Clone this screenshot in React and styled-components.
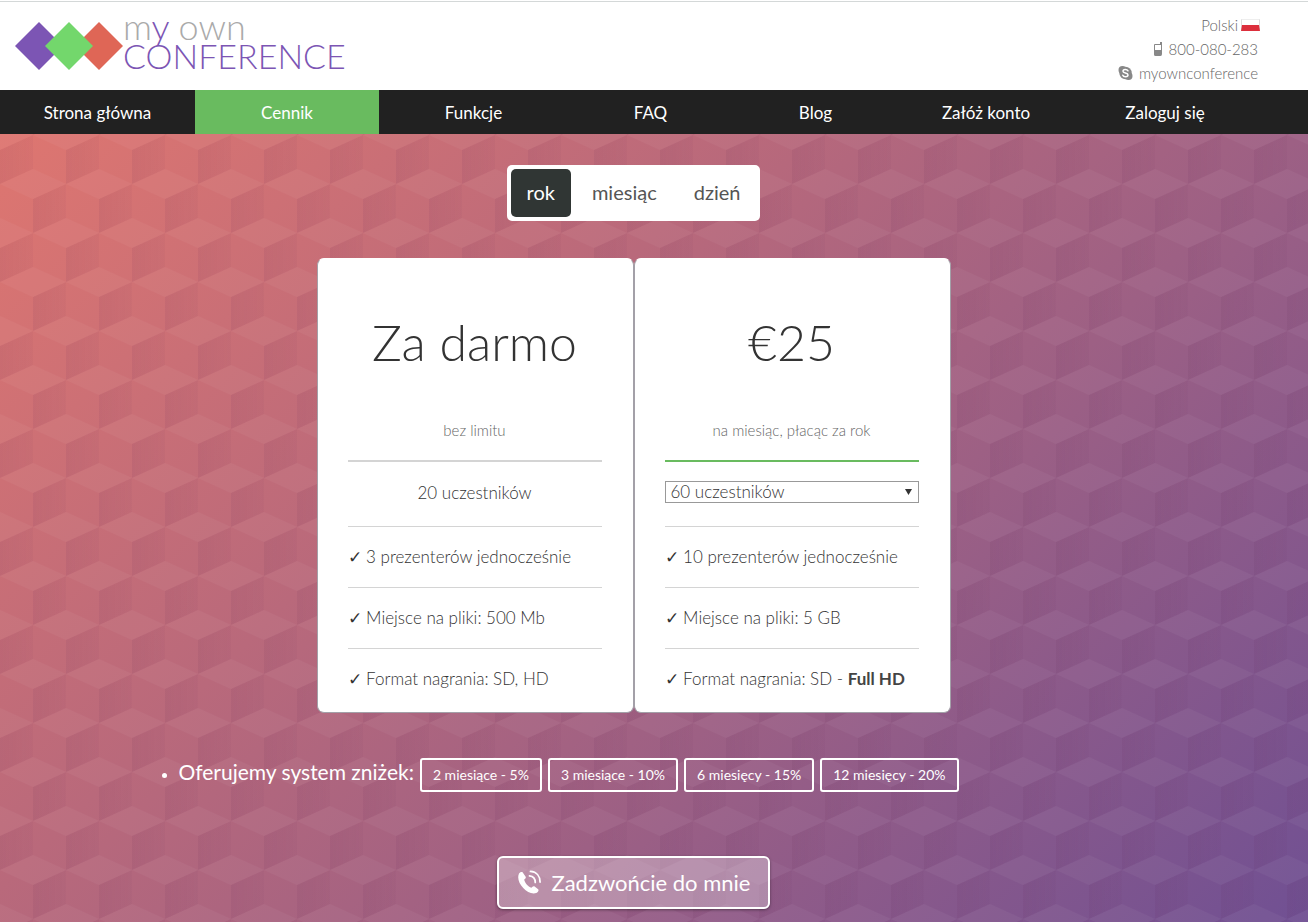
import React, { useState } from "react";
import styled, { createGlobalStyle } from "styled-components";

const menu = [
  "Strona główna",
  "Cennik",
  "Funkcje",
  "FAQ",
  "Blog",
  "Załóż konto",
  "Zaloguj się",
];

const periods = ["rok", "miesiąc", "dzień"];

const discounts = [
  "2 miesiące - 5%",
  "3 miesiące - 10%",
  "6 miesięcy - 15%",
  "12 miesięcy - 20%",
];

const Cubes = () => (
  <Pattern aria-hidden="true">
    <defs>
      <linearGradient id="side" x1="0" x2="1" y1="0" y2="0">
        <stop offset="0" stopColor="#5a2050" stopOpacity="0.08" />
        <stop offset="1" stopColor="#5a2050" stopOpacity="0.04" />
      </linearGradient>
      <pattern
        id="cubes"
        width="66"
        height="98"
        y="50"
        patternUnits="userSpaceOnUse"
      >
        <g fill="#fff" fillOpacity="0.04">
          <path d="M0 0 33 -15 66 0 33 15Z" />
          <path d="M0 98 33 83 66 98 33 113Z" />
          <path d="M-33 49 0 34 33 49 0 64Z" />
          <path d="M33 49 66 34 99 49 66 64Z" />
        </g>
        <g fill="url(#side)">
          <path d="M33 15 66 0V34L33 49Z" />
          <path d="M0 64 33 49V83L0 98Z" />
        </g>
      </pattern>
    </defs>
    <rect width="100%" height="100%" fill="url(#cubes)" />
  </Pattern>
);

const App = () => {
  const [period, setPeriod] = useState("rok");

  return (
    <Page>
      <GlobalStyle />
      <Header>
        <Logo href="#">
          <svg width="108" height="48" viewBox="0 0 108 48" aria-hidden="true">
            <path d="M84 0 108 24 84 48 60 24Z" fill="#df6656" />
            <path d="M24 0 48 24 24 48 0 24Z" fill="#7c55b4" />
            <path d="M54 0 78 24 54 48 30 24Z" fill="#73d76c" />
          </svg>
          <LogoText>
            <Own>
              m<b>y</b> own
            </Own>
            <span>CONFERENCE</span>
          </LogoText>
        </Logo>
        <Contact>
          <Language href="#">
            Polski
            <Flag />
          </Language>
          <ContactLine href="#">
            <svg width="10" height="14" viewBox="0 0 10 14" aria-hidden="true">
              <path
                d="M7 0H9V12Q9 14 7.500 14H2.500Q1 14 1 12.500V3Q1 2 2 2H7Z"
                fill="#888"
              />
              <path d="M2 3H8V8H2Z" fill="#fff" />
            </svg>
            800-080-283
          </ContactLine>
          <ContactLine href="#">
            <svg width="15" height="14" viewBox="0 0 15 14" aria-hidden="true">
              <circle cx="4.500" cy="4" r="4" fill="#888" />
              <circle cx="10.500" cy="10" r="4" fill="#888" />
              <circle cx="7.500" cy="7" r="6.200" fill="#888" />
              <path
                d="M10 4.800C9 3 5 3 5 5.200 5 7.500 10 6.500 10 9 10 11.200 5.500 11.200 4.800 9.200"
                fill="none"
                stroke="#fff"
                strokeWidth="1.500"
                strokeLinecap="round"
              />
            </svg>
            myownconference
          </ContactLine>
        </Contact>
      </Header>

      <Nav>
        {menu.map((item) => (
          <NavLink href="#" key={item} $active={item === "Cennik"}>
            {item}
          </NavLink>
        ))}
      </Nav>

      <Pricing>
        <Cubes />
        <Content>
          <Switch>
            {periods.map((item) => (
              <SwitchButton
                type="button"
                key={item}
                $active={item === period}
                onClick={() => setPeriod(item)}
              >
                {item}
              </SwitchButton>
            ))}
          </Switch>

          <Cards>
            <Card>
              <Price>Za darmo</Price>
              <Note>bez limitu</Note>
              <Users>20 uczestników</Users>
              <Feature>✓ 3 prezenterów jednocześnie</Feature>
              <Feature>✓ Miejsce na pliki: 500 Mb</Feature>
              <Feature>✓ Format nagrania: SD, HD</Feature>
            </Card>
            <Card>
              <Price>€25</Price>
              <Note $green>na miesiąc, płacąc za rok</Note>
              <Users>
                <SelectWrap>
                  <Select aria-label="Liczba uczestników" defaultValue="60">
                    <option value="60">60 uczestników</option>
                  </Select>
                  <svg width="7" height="6" viewBox="0 0 7 6">
                    <path d="M0 0H7L3.500 6Z" fill="#333" />
                  </svg>
                </SelectWrap>
              </Users>
              <Feature>✓ 10 prezenterów jednocześnie</Feature>
              <Feature>✓ Miejsce na pliki: 5 GB</Feature>
              <Feature>
                ✓ Format nagrania: SD - <b>Full HD</b>
              </Feature>
            </Card>
          </Cards>

          <Offers>
            <li>
              <OfferRow>
                <span>Oferujemy system zniżek:</span>
                {discounts.map((item) => (
                  <Discount type="button" key={item}>
                    {item}
                  </Discount>
                ))}
              </OfferRow>
            </li>
          </Offers>

          <CallButton type="button">
            <svg width="25" height="25" viewBox="0 0 26 26" aria-hidden="true">
              <path
                d="M2 4C3 2 5 1.500 6 2.500L9 7C9.500 8 9 9 7.500 10 8 13.500 11.500 17.500 15 18.500 16 17 17 16.500 18 17L22 20C23 21 22 23 20 24 11 27-2 13 2 4Z"
                fill="#fff"
              />
              <path
                d="M13 6C17 6.500 19 9 19 13M14 1.500C20.500 2 24 6.500 24 12.500"
                fill="none"
                stroke="#fff"
                strokeWidth="1.800"
                strokeLinecap="round"
              />
            </svg>
            Zadzwońcie do mnie
          </CallButton>
        </Content>
      </Pricing>
    </Page>
  );
};

export default App;

const GlobalStyle = createGlobalStyle`
  * {
    box-sizing: border-box;
  }
  body {
    margin: 0;
    background: #fff;
  }
  body, button, select {
    font-family: Lato, sans-serif;
  }
  a {
    text-decoration: none;
  }
`;

const Page = styled.div`
  min-height: 100vh;
  display: flex;
  flex-direction: column;
  padding-top: 1px;
`;

const Header = styled.header`
  min-height: 89px;
  padding: 0 50px 0 15px;
  border-top: 1px solid #d4d8d8;
  display: flex;
  align-items: center;
  justify-content: space-between;
`;

const Logo = styled.a`
  display: flex;
  align-items: center;
`;

const LogoText = styled.div`
  display: flex;
  flex-direction: column;
  padding-bottom: 10px;
  font-size: 34px;
  line-height: 30px;
  font-weight: 300;
  color: #7c55b4;
`;

const Own = styled.span`
  font-size: 36px;
  color: #aaa;
  b {
    font-weight: 300;
    color: #7c55b4;
  }
`;

const Contact = styled.div`
  display: flex;
  flex-direction: column;
  align-items: flex-end;
  padding-top: 6px;
  font-size: 15px;
  line-height: 24px;
  font-weight: 300;
`;

const ContactLine = styled.a`
  display: flex;
  align-items: center;
  gap: 6px;
  color: #666;
`;

const Language = styled(ContactLine)`
  gap: 3px;
  margin-right: -2px;
`;

const Flag = styled.span`
  width: 19px;
  height: 12px;
  border: 1px solid #ddd;
  border-top-color: #eee;
  border-bottom: 6px solid #dc2f3c;
`;

const Nav = styled.nav`
  display: grid;
  grid-template-columns: 195fr 184fr 189fr 165fr 165fr 176fr 182fr 52fr;
  background: #212121;
`;

const NavLink = styled.a`
  padding: 11px 0 9px;
  font-size: 17px;
  line-height: 24px;
  text-align: center;
  color: #fff;
  background: ${(props) => (props.$active ? "#69bb5f" : "transparent")};
`;

const Pricing = styled.main`
  flex: 1;
  position: relative;
  background: linear-gradient(
    135deg,
    #de7670 0%,
    #b9697b 36%,
    #9d6084 62%,
    #705093 100%
  );
`;

const Pattern = styled.svg`
  position: absolute;
  inset: 0;
  width: 100%;
  height: 100%;
`;

const Content = styled.div`
  position: relative;
  padding: 31px 41px 14px 0;
  display: flex;
  flex-direction: column;
  align-items: center;
`;

const Switch = styled.div`
  display: flex;
  gap: 5px;
  padding: 4px;
  background: #fff;
  border-radius: 5px;
`;

const SwitchButton = styled.button`
  padding: 11px 16px 13px;
  border: 0;
  border-radius: 5px;
  font-size: 20px;
  line-height: 24px;
  color: ${(props) => (props.$active ? "#fff" : "#555")};
  background: ${(props) => (props.$active ? "#303634" : "#fff")};
`;

const Cards = styled.div`
  display: flex;
  flex-wrap: wrap;
  margin-top: 37px;
`;

const Card = styled.section`
  width: 317px;
  padding: 47px 31px 3px 30px;
  border: 1px solid #a3a0a8;
  border-top-color: #fff;
  border-radius: 7px;
  background: #fff;
  color: #333;
  font-size: 17px;
  line-height: 24px;
  font-weight: 300;
`;

const Price = styled.h2`
  margin: 0 0 40px;
  font-size: 50px;
  line-height: 72px;
  font-weight: 300;
  text-align: center;
`;

const Note = styled.p`
  margin: 0;
  padding-bottom: 18px;
  border-bottom: 2px solid ${(props) => (props.$green ? "#69bb5f" : "#d4d4d4")};
  font-size: 15px;
  text-align: center;
  color: #666;
`;

const Users = styled.div`
  min-height: 64px;
  padding: 19px 0;
  text-align: center;
`;

const Feature = styled.div`
  border-top: 1px solid #d4d4d4;
  padding: 18px 0;
  b {
    font-weight: 700;
    color: #444;
  }
`;

const SelectWrap = styled.div`
  position: relative;
  display: flex;
  svg {
    position: absolute;
    right: 7px;
    top: 8px;
    pointer-events: none;
  }
`;

const Select = styled.select`
  appearance: none;
  width: 100%;
  height: 22px;
  padding: 0 5px;
  border: 1px solid #999;
  border-radius: 0;
  background: #fff;
  font-size: 17px;
  font-weight: 300;
  line-height: 20px;
  color: #333;
`;

const Offers = styled.ul`
  width: 100%;
  max-width: 950px;
  margin: 44px 0 0;
  padding-left: 20px;
  color: #fff;
  font-size: 21px;
  line-height: 30px;
  li::marker {
    font-size: 16px;
  }
`;

const OfferRow = styled.div`
  display: flex;
  flex-wrap: wrap;
  align-items: baseline;
  gap: 6px;
`;

const Discount = styled.button`
  padding: 3px 11px;
  border: 2px solid #fff;
  border-radius: 3px;
  background: transparent;
  color: #fff;
  font-size: 14px;
  line-height: 24px;
`;

const CallButton = styled.button`
  display: flex;
  align-items: center;
  gap: 10px;
  margin-top: 64px;
  padding: 12px 18px;
  border: 2px solid #fff;
  border-radius: 6px;
  background: rgba(255, 255, 255, 0.3);
  box-shadow: 0 1px 3px rgba(0, 0, 0, 0.4);
  color: #fff;
  font-size: 22px;
  line-height: 24px;
`;
